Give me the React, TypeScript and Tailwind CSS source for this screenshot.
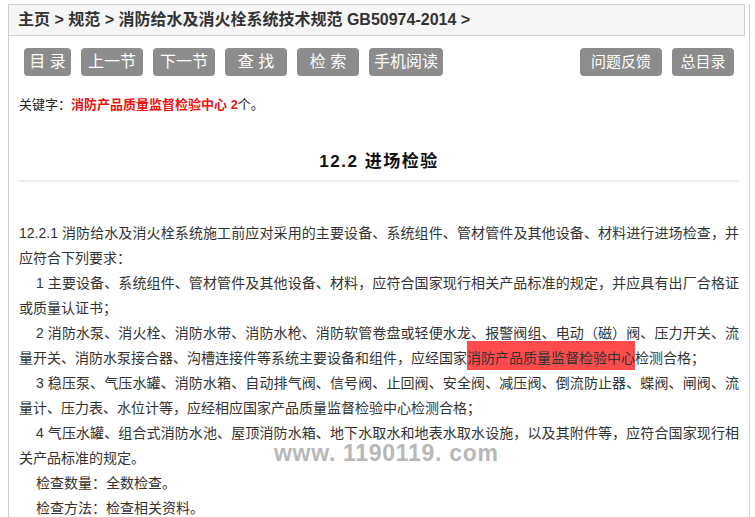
export default function App() {
  const navLeft = ['目 录', '上一节', '下一节', '查 找', '检 索', '手机阅读'];
  const navRight = ['问题反馈', '总目录'];

  return (
    <div
      className="bg-white min-h-[517px] pt-[4px] text-[#333]"
      style={{ fontFamily: '"Liberation Sans", "Noto Sans CJK SC", sans-serif' }}
    >
      <div className="ml-[8px] w-[742px] min-h-[513px] border-l border-r border-[#cfcfcf]">
        <div className="h-[32px] mr-[4px] bg-[#f6f6f6] border-t border-b border-r border-[#cfcfcf] flex items-center pl-[9px] text-[16px] font-bold text-[#333]">
          主页 &gt; 规范 &gt; 消防给水及消火栓系统技术规范 GB50974-2014 &gt;
        </div>

        <div className="flex items-center justify-between pl-[15px] pr-[15px] mt-[12px]">
          <div className="flex gap-[10px]">
            {navLeft.map((b, i) => (
              <span
                key={b}
                className={`h-[28px] flex items-center justify-center rounded-[4px] bg-[#8c8c8c] text-white text-[16px] ${i === 0 ? 'w-[47px]' : i === 5 ? 'w-[74px] text-[15px]' : 'w-[62px]'}`}
              >
                {b}
              </span>
            ))}
          </div>
          <div className="flex gap-[10px]">
            {navRight.map((b) => (
              <span
                key={b}
                className={`h-[28px] flex items-center justify-center rounded-[4px] bg-[#8c8c8c] text-white text-[15px] ${b === '问题反馈' ? 'w-[82px]' : 'w-[62px]'}`}
              >
                {b}
              </span>
            ))}
          </div>
        </div>

        <p className="mt-[19px] pl-[10px] text-[13px] text-[#222]">
          关键字：<span className="text-[#ee1111] font-bold">消防产品质量监督检验中心 2</span>个。
        </p>

        <h1 className="mt-[34px] text-center text-[17px] font-bold tracking-[1.5px] text-[#111]">
          12.2 进场检验
        </h1>
        <div className="mx-[10px] mt-[6px] h-[2px] bg-[#eeeeee]" />

        <div className="relative mt-[39px] px-[10px] text-[14px] leading-[25px] text-[#333] text-justify">
          <p>
            12.2.1 消防给水及消火栓系统施工前应对采用的主要设备、系统组件、管材管件及其他设备、材料进行进场检查，并应符合下列要求：
          </p>
          <p className="indent-[17px]">
            1 主要设备、系统组件、管材管件及其他设备、材料，应符合国家现行相关产品标准的规定，并应具有出厂合格证或质量认证书；
          </p>
          <p className="indent-[17px]">
            2 消防水泵、消火栓、消防水带、消防水枪、消防软管卷盘或轻便水龙、报警阀组、电动（磁）阀、压力开关、流量开关、消防水泵接合器、沟槽连接件等系统主要设备和组件，应经国家
            <span className="bg-[#ff4b4b] pt-[9px] pb-[4px]">消防产品质量监督检验中心</span>检测合格；
          </p>
          <p className="indent-[17px]">
            3 稳压泵、气压水罐、消防水箱、自动排气阀、信号阀、止回阀、安全阀、减压阀、倒流防止器、蝶阀、闸阀、流量计、压力表、水位计等，应经相应国家产品质量监督检验中心检测合格；
          </p>
          <p className="indent-[17px]">
            4 气压水罐、组合式消防水池、屋顶消防水箱、地下水取水和地表水取水设施，以及其附件等，应符合国家现行相关产品标准的规定。
          </p>
          <p className="indent-[17px]">检查数量：全数检查。</p>
          <p className="indent-[17px]">检查方法：检查相关资料。</p>

          <span
            className="absolute left-[265px] top-[220px] text-[23px] font-bold tracking-[0.7px] text-[#b8b8b8] whitespace-nowrap"
            style={{ fontFamily: '"Liberation Sans", Arial, sans-serif' }}
          >
            www. 1190119. com
          </span>
        </div>
      </div>
    </div>
  );
}
